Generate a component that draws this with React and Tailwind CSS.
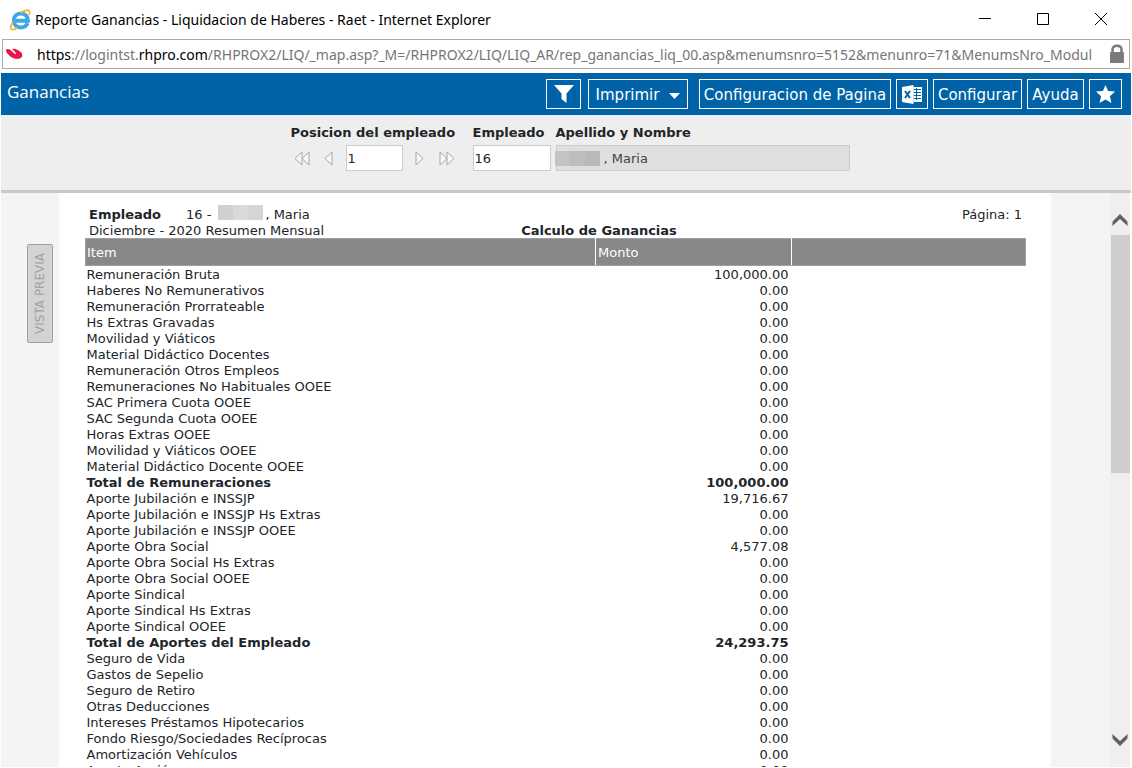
import { useState } from "react";

const ROWS = [
  ["Remuneración Bruta", "100,000.00"],
  ["Haberes No Remunerativos", "0.00"],
  ["Remuneración Prorrateable", "0.00"],
  ["Hs Extras Gravadas", "0.00"],
  ["Movilidad y Viáticos", "0.00"],
  ["Material Didáctico Docentes", "0.00"],
  ["Remuneración Otros Empleos", "0.00"],
  ["Remuneraciones No Habituales OOEE", "0.00"],
  ["SAC Primera Cuota OOEE", "0.00"],
  ["SAC Segunda Cuota OOEE", "0.00"],
  ["Horas Extras OOEE", "0.00"],
  ["Movilidad y Viáticos OOEE", "0.00"],
  ["Material Didáctico Docente OOEE", "0.00"],
  ["Total de Remuneraciones", "100,000.00", true],
  ["Aporte Jubilación e INSSJP", "19,716.67"],
  ["Aporte Jubilación e INSSJP Hs Extras", "0.00"],
  ["Aporte Jubilación e INSSJP OOEE", "0.00"],
  ["Aporte Obra Social", "4,577.08"],
  ["Aporte Obra Social Hs Extras", "0.00"],
  ["Aporte Obra Social OOEE", "0.00"],
  ["Aporte Sindical", "0.00"],
  ["Aporte Sindical Hs Extras", "0.00"],
  ["Aporte Sindical OOEE", "0.00"],
  ["Total de Aportes del Empleado", "24,293.75", true],
  ["Seguro de Vida", "0.00"],
  ["Gastos de Sepelio", "0.00"],
  ["Seguro de Retiro", "0.00"],
  ["Otras Deducciones", "0.00"],
  ["Intereses Préstamos Hipotecarios", "0.00"],
  ["Fondo Riesgo/Sociedades Recíprocas", "0.00"],
  ["Amortización Vehículos", "0.00"],
  ["Aporte Acción", "0.00"],
];

export default function App(){
  return (
    <div className="h-screen flex flex-col overflow-hidden bg-white text-[#212529] text-[13px] leading-4 font-['DejaVu_Sans',sans-serif]">
      <TitleBar />
      <AddressBar />
      <div className="flex-1 min-h-0 flex flex-col mx-px mt-1 mb-px">
        <Toolbar />
        <EmployeePicker />
        <div className="flex-1 min-h-0 flex mr-px bg-[#f4f4f4]">
          <div className="w-[58px] shrink-0 pt-[51px] pl-[26px]">
            <button disabled className="h-[99px] w-[26px] flex items-center justify-center rounded-xs border border-[#a0a0a0] bg-[#d3d3d3] text-[#a0a0a0] text-[12px]">
              <span className="[writing-mode:vertical-rl] rotate-180">VISTA PREVIA</span>
            </button>
          </div>
          <Report />
          <div className="w-[59px] shrink-0" />
          <ScrollBar />
        </div>
      </div>
    </div>
  );
}

function TitleBar(){
  return (
    <header className="h-[39px] shrink-0 flex items-center pl-[9px] text-black">
      <IeLogo />
      <h1 className="flex-1 ml-1 pt-px text-[14px] font-['Noto_Sans',sans-serif]">Reporte Ganancias - Liquidacion de Haberes - Raet - Internet Explorer</h1>
      <div className="flex gap-[34px] pr-[19px]">
        <WinButton label="Minimizar"><path d="M3 6.5h12" /></WinButton>
        <WinButton label="Maximizar"><path d="M3.5 1.5h11v11h-11z" /></WinButton>
        <WinButton label="Cerrar"><path d="M3 1l12 12M15 1L3 13" /></WinButton>
      </div>
    </header>
  );
}

function WinButton({label, children}){
  return (
    <button aria-label={label} className="w-6 flex justify-center">
      <svg width="18" height="16" viewBox="0 0 18 16" fill="none" stroke="#000">{children}</svg>
    </button>
  );
}

function AddressBar(){
  return (
    <div className="h-[30px] shrink-0 mx-0.5 flex items-center border border-[#acacac] pl-[3px] pr-1 font-['Noto_Sans',sans-serif] text-[14px]">
      <svg width="17" height="12" viewBox="0 0 17 12" className="shrink-0">
        <path fill="#e8174b" d="M0 2.2C.6.600 3 .8 4.800 2.200L9.200 6.200C9.800 6 10 5.400 9.600 4.800L6 .8C9 .2 13.500 2.200 15.400 4.600 17.200 7.200 16.200 9.800 13.600 10.600 10.600 11.400 7 10.600 4.400 8.400 2 6.400-.4 4.200 0 2.200z" />
      </svg>
      <p className="flex-1 min-w-0 ml-[14px] pt-0.5 leading-6 whitespace-nowrap overflow-hidden text-[#767676]">
        <span className="text-black">https</span>://logintst.<span className="text-black">rhpro.com</span>/RHPROX2/LIQ/_map.asp?_M=/RHPROX2/LIQ/LIQ_AR/rep_ganancias_liq_00.asp&amp;menumsnro=5152&amp;menunro=71&amp;MenumsNro_Modul
      </p>
      <svg width="16" height="20" viewBox="0 0 16 20" className="shrink-0 ml-2">
        <path fill="none" stroke="#7a7a7a" strokeWidth="2.5" d="M3.500 9V5.800C3.500 3 5.500 1.800 8 1.800s4.500 1.200 4.500 4V9" />
        <rect x="1" y="8" width="14" height="11" rx="1" fill="#7a7a7a" />
      </svg>
    </div>
  );
}

function Toolbar(){
  return (
    <nav className="h-[42px] shrink-0 flex items-center bg-[#0063a7] pl-1.5 pr-[9px] text-white">
      <h2 className="flex-1 pb-1 text-[17px] leading-6 font-['Open_Sans',sans-serif]">Ganancias</h2>
      <div className="flex gap-[5px] text-[15px]">
        <ToolButton label="Filtrar" className="w-[35px]">
          <svg width="20" height="20" viewBox="0 0 20 20" fill="#fff"><path d="M0 0h20l-7.500 8.500V18l-5-4V8.500z" /></svg>
        </ToolButton>
        <ToolButton className="w-[100px] ml-0.5">
          Imprimir
          <svg width="11" height="6" viewBox="0 0 11 6" fill="#fff" className="ml-2.5 mt-0.5"><path d="M0 0h11L5.500 6z" /></svg>
        </ToolButton>
        <ToolButton className="w-[192px] ml-1.5">Configuracion de Pagina</ToolButton>
        <ToolButton label="Excel" className="w-8"><ExcelIcon /></ToolButton>
        <ToolButton className="w-[89px]">Configurar</ToolButton>
        <ToolButton className="w-[57px]">Ayuda</ToolButton>
        <ToolButton label="Favorito" className="w-[33px]">
          <svg width="20" height="20" viewBox="0 0 20 20" fill="#fff"><path d="M9.500 0l2.600 6 7 .600-5.200 4.600L15.500 18 9.500 14.400 3.500 18 5.100 11.200 0 6.600 6.900 6z" /></svg>
        </ToolButton>
      </div>
    </nav>
  );
}

function ToolButton({label, className, children}){
  return (
    <button aria-label={label} className={`h-[30px] pt-0.5 shrink-0 flex items-center justify-center border border-white whitespace-nowrap ${className}`}>
      {children}
    </button>
  );
}

function ExcelIcon(){
  return (
    <svg width="20" height="20" viewBox="0 0 20 20">
      <path fill="#fff" d="M0 2L11.500 0v19L0 17z" />
      <path fill="none" stroke="#0063a7" strokeWidth="2" d="M3 6l5 7M8 6l-5 7" />
      <path fill="#fff" d="M11.500 2H20v15h-8.500z" />
      <path fill="none" stroke="#0063a7" d="M12 4.500h7M12 7.500h7M12 10.500h7M12 13.500h7M14.500 3v12" />
    </svg>
  );
}

function EmployeePicker(){
  const [pos,setPos]=useState("1");
  const [legajo,setLegajo]=useState("16");
  return (
    <div className="h-[78px] shrink-0 flex justify-center bg-[#eee] border-b-3 border-[#c8c8c8] pt-2.5 pl-2">
      <div className="w-[182px]">
        <label htmlFor="pos" className="block font-bold whitespace-nowrap">Posicion del empleado</label>
        <div className="flex items-center mt-1">
          <NavArrow label="Primero" className="ml-[3px]"><path d="M8 2L1 8.500 8 15z" /><path d="M15 2L8 8.500 15 15z" /></NavArrow>
          <NavArrow label="Anterior" className="ml-2.5"><path d="M12 2L5 8.500 12 15z" /></NavArrow>
          <input id="pos" value={pos} onChange={(e)=> setPos(e.target.value)} className="w-[57px] h-[26px] ml-2.5 px-px border border-[#ccc] bg-white" />
          <NavArrow label="Siguiente" className="ml-2"><path d="M5 2l7 6.500L5 15z" /></NavArrow>
          <NavArrow label="Ultimo" className="ml-3"><path d="M1 2l7 6.500L1 15z" /><path d="M8 2l7 6.500L8 15z" /></NavArrow>
        </div>
      </div>
      <div className="w-[83px]">
        <label htmlFor="legajo" className="block font-bold">Empleado</label>
        <input id="legajo" value={legajo} onChange={(e)=> setLegajo(e.target.value)} className="block w-[78px] h-[26px] mt-1 px-px border border-[#ccc] bg-white" />
      </div>
      <div className="w-[294px]">
        <label htmlFor="nombre" className="block font-bold">Apellido y Nombre</label>
        <div className="relative mt-1">
          <input id="nombre" readOnly value=", Maria" className="block w-full h-[26px] pl-[47px] border border-[#ccc] bg-[#dfdfde] text-[#444]" />
          <span className="absolute -left-px top-1.5 w-[45px] h-[15px] flex">
            <i className="flex-1 bg-[#c3c3c2]" />
            <i className="flex-1 bg-[#bdbdbc]" />
            <i className="flex-1 bg-[#b9b9b8]" />
          </span>
        </div>
      </div>
    </div>
  );
}

function NavArrow({label, className, children}){
  return (
    <button aria-label={label} className={`shrink-0 ${className}`}>
      <svg width="16" height="17" viewBox="0 0 16 17" fill="#f8f8f8" stroke="#a8a8a8" strokeLinejoin="round">{children}</svg>
    </button>
  );
}

function Report(){
  return (
    <main className="flex-1 min-w-0 overflow-hidden bg-white pt-3.5 pl-[26px] pr-[25px]">
      <div className="flex justify-between px-1">
        <p className="flex">
          <b className="w-[97px]">Empleado</b>
          16 -
          <span className="w-[45px] h-[15px] flex ml-[7px] mr-0.5 -mt-0.5">
            <i className="flex-1 bg-[#cfd0d1]" />
            <i className="flex-1 bg-[#dadadb]" />
            <i className="flex-1 bg-[#d4d5d5]" />
          </span>
          , Maria
        </p>
        <p>Página: 1</p>
      </div>
      <div className="grid grid-cols-[1fr_auto_1fr] px-1">
        <p>Diciembre - 2020 Resumen Mensual</p>
        <b className="ml-[87px]">Calculo de Ganancias</b>
      </div>
      <table className="w-full table-fixed border-collapse -mt-px leading-[14px]">
        <colgroup>
          <col className="w-[510px]" />
          <col className="w-[196px]" />
          <col />
        </colgroup>
        <thead>
          <tr className="h-[27px] bg-[#888] text-white text-left">
            <th className="p-0 pt-0.5 pl-px font-normal border border-[#a0a0a0] border-r-white">Item</th>
            <th className="p-0 pt-0.5 pl-0.5 font-normal border border-[#a0a0a0] border-x-white">Monto</th>
            <th className="p-0 border border-[#a0a0a0] border-l-white" />
          </tr>
        </thead>
        <tbody>
          {ROWS.map(([item, monto, total])=> (
            <tr key={item} className={total? 'h-4 font-bold':'h-4'}>
              <td className="p-0 pt-0.5 pl-px whitespace-nowrap">{item}</td>
              <td className="p-0 pt-0.5 pr-[3px] text-right">{monto}</td>
              <td />
            </tr>
          ))}
        </tbody>
      </table>
    </main>
  );
}

function ScrollBar(){
  return (
    <div className="w-5 shrink-0 flex flex-col items-center bg-[#efefef]">
      <svg width="16" height="42" viewBox="0 0 16 42" fill="#606060" className="shrink-0"><path d="M.500 28.500L8 21l7.500 7.500V33L8 26 .500 33z" /></svg>
      <div className="w-[19px] h-[238px] shrink-0 self-end bg-[#cdcdcd]" />
      <div className="flex-1" />
      <svg width="16" height="33" viewBox="0 0 16 33" fill="#606060" className="shrink-0"><path d="M.500 0v4.500L8 12l7.500-7.500V0L8 7z" /></svg>
    </div>
  );
}

function IeLogo(){
  return (
    <svg width="22" height="22" viewBox="0 0 22 22" fill="none">
      <path stroke="#3ba7e8" strokeWidth="4" d="M18.500 14.200c-1 2.800-3.400 4.300-6.500 4.300-4.300 0-7.200-2.900-7.200-7s2.900-7 7.200-7c4 0 6.900 2.800 6.900 7.300H7" />
      <path stroke="#f2b632" strokeWidth="1.8" d="M20 6C21 3.600 20.800 1.600 19.200 1.300 17.500 1 14.500 2 11.500 4M4 12.500C1.800 16.200 1.200 19.300 2.600 20.300c1.400.900 3.900-.100 6-1.500" />
    </svg>
  );
}
